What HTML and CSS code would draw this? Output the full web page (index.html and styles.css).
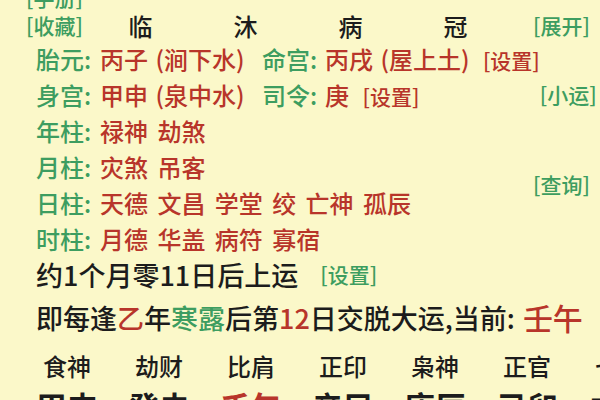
FILE: index.html
```html
<!DOCTYPE html>
<html lang="zh-CN">
<head>
<meta charset="utf-8">
<title>八字</title>
<link rel="stylesheet" href="styles.css">
</head>
<body>
<div class="page">
  <div class="top-row"><span class="link">[手册]</span></div>
  <div class="head-row">
    <span class="link fav">[收藏]</span>
    <div class="stages"><span>临</span><span>沐</span><span>病</span><span>冠</span></div>
    <span class="link">[展开]</span>
  </div>

  <div class="info">
    <span class="lbl">胎元:</span><span class="val">丙子 (涧下水)</span>
    <span class="lbl">命宫:</span><span class="val">丙戌 (屋上土) <span class="set">[设置]</span></span>
    <span></span>
    <span class="lbl">身宫:</span><span class="val">甲申 (泉中水)</span>
    <span class="lbl">司令:</span><span class="val">庚 <span class="set">[设置]</span></span>
    <span class="link">[小运]</span>
  </div>

  <div class="shensha">
    <span class="lbl">年柱:</span><span class="val">禄神 劫煞</span>
    <span class="lbl">月柱:</span><span class="val">灾煞 吊客</span>
    <span class="link query">[查询]</span>
    <span class="lbl">日柱:</span><span class="val">天德 文昌 学堂 绞 亡神 孤辰</span>
    <span class="lbl">时柱:</span><span class="val">月德 华盖 病符 寡宿</span>
  </div>

  <div class="start-row">约1个月零11日后上运<span class="link set-green">[设置]</span></div>

  <div class="luck-row">即每逢<span class="red">乙</span>年<span class="green">寒露</span>后第<span class="red">12</span>日交脱大运,当前: <span class="red now">壬午</span></div>

  <div class="gods">
    <span>食神</span><span>劫财</span><span>比肩</span><span>正印</span><span>枭神</span><span>正官</span><span>七杀</span>
  </div>
  <div class="pillars">
    <span>甲申</span><span>癸未</span><span class="red">壬午</span><span>辛巳</span><span>庚辰</span><span>己卯</span><span>戊寅</span>
  </div>
</div>
</body>
</html>
```

FILE: styles.css
```css
html, body {
  margin: 0;
  padding: 0;
}
body {
  background: #fbf8c9;
}
.page {
  width: 600px;
  height: 400px;
  overflow: hidden;
  background: #fbf8c9;
  font-family: "Noto Sans CJK SC", "Noto Sans", sans-serif;
  font-weight: 500;
  color: #1c1c1c;
  font-size: 24px;
}
.link {
  color: #3d9d60;
  font-size: 21px;
  white-space: nowrap;
}
.red { color: #b8352a; }
.green { color: #3d9d60; }

.top-row {
  margin-top: -18px;
  height: 28px;
  line-height: 28px;
  padding-left: 26px;
}
.head-row {
  height: 30px;
  display: flex;
  align-items: center;
  padding: 0 10px 0 26px;
}
.head-row .fav {
  width: 62px;
}
.stages {
  flex: 1;
  display: flex;
  font-size: 24px;
  color: #1c1c1c;
}
.stages span {
  width: 105px;
  text-align: center;
}

.info {
  display: grid;
  grid-template-columns: 64px 162px 63px 1fr auto;
  grid-auto-rows: 36px;
  align-items: center;
  padding: 0 10px 0 36px;
}
.lbl {
  color: #3d9d60;
  white-space: nowrap;
}
.val {
  color: #b8352a;
  white-space: nowrap;
  word-spacing: 2px;
}
.set {
  font-size: 21px;
  margin-left: 6px;
  word-spacing: 0;
}

.shensha {
  display: grid;
  grid-template-columns: 64px 1fr auto;
  grid-template-rows: repeat(4, 36px);
  align-items: center;
  padding: 0 10px 0 36px;
}
.shensha .lbl { grid-column: 1; }
.shensha .val {
  grid-column: 2;
  word-spacing: 4px;
}
.shensha .query {
  grid-column: 3;
  grid-row: 2 / span 2;
  align-self: center;
}

.start-row {
  height: 36px;
  display: flex;
  align-items: center;
  padding-left: 36px;
  font-size: 27px;
}
.set-green {
  margin-left: 22px;
}

.luck-row {
  height: 50px;
  display: flex;
  align-items: center;
  padding-left: 36px;
  font-size: 27px;
  white-space: nowrap;
}
.luck-row .now {
  font-size: 30px;
  margin-left: 8px;
}

.gods, .pillars {
  display: flex;
  padding-left: 21px;
  white-space: nowrap;
}
.gods span, .pillars span {
  flex: 0 0 92px;
  text-align: center;
}
.gods {
  height: 46px;
  align-items: center;
  font-size: 24px;
}
.pillars {
  height: 34px;
  align-items: center;
  font-size: 31px;
  font-weight: 700;
}
```
